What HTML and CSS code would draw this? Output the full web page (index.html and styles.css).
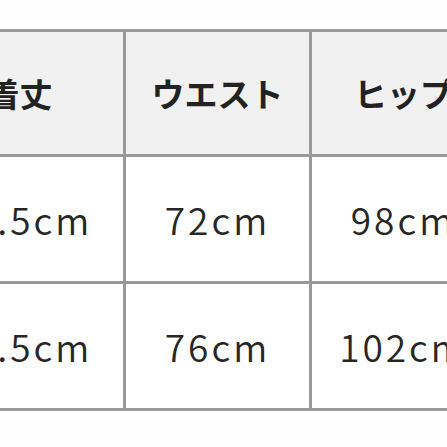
FILE: index.html
```html
<!DOCTYPE html>
<html lang="ja">
<head>
<meta charset="utf-8">
<link rel="stylesheet" href="styles.css">
</head>
<body>
<div class="size-table">
  <div class="cell head first">着丈</div>
  <div class="cell head">ウエスト</div>
  <div class="cell head">ヒップ</div>
  <div class="cell val first">68.5cm</div>
  <div class="cell val">72cm</div>
  <div class="cell val">98cm</div>
  <div class="cell val first">70.5cm</div>
  <div class="cell val">76cm</div>
  <div class="cell val">102cm</div>
</div>
</body>
</html>
```
FILE: styles.css
```css
html, body {
  margin: 0;
  padding: 0;
  background: #fefefe;
  overflow: hidden;
}
body {
  width: 447px;
  height: 447px;
}
.size-table {
  display: grid;
  grid-template-columns: 183px 183px 183px;
  grid-template-rows: 122px 124px 124px;
  gap: 3px;
  padding: 3px;
  background: #999999;
  margin: 29px 0 0 -63px;
  width: max-content;
}
.cell {
  display: flex;
  align-items: center;
  justify-content: center;
  color: #222222;
  font-family: "Noto Sans CJK JP", "Noto Sans", sans-serif;
}
.head {
  background: #f1f1f1;
  font-size: 33px;
  font-weight: 700;
}
.head.first {
  padding-right: 24px;
}
.val {
  background: #ffffff;
  font-size: 37px;
  font-weight: 350;
  letter-spacing: 3px;
  color: #262626;
}
.val.first {
  padding-right: 20px;
}
```
